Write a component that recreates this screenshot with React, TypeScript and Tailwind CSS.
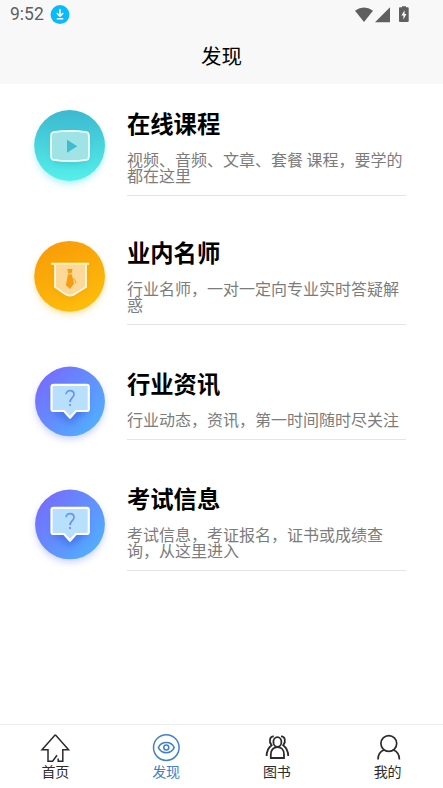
import React from "react";

interface DiscoverItem {
  title: string;
  description: string;
  icon: React.ReactNode;
  rowClass: string;
  bodyClass: string;
}

interface TabProps {
  label: string;
  active?: boolean;
  children: React.ReactNode;
}

function CourseIcon() {
  return (
    <svg viewBox="0 0 100 100" aria-hidden className="h-[100px] w-[100px] shrink-0">
      <defs>
        <linearGradient id="course-bg" x1="0" y1="0" x2="0" y2="1">
          <stop offset="0" stopColor="#3cb8d0" />
          <stop offset="1" stopColor="#55f0ea" />
        </linearGradient>
        <filter id="course-blur" x="-30%" y="-30%" width="160%" height="160%">
          <feGaussianBlur stdDeviation="3.5" />
        </filter>
      </defs>
      <circle cx="49.6" cy="54.5" r="34.5" fill="#5fe3e8" opacity="0.5" filter="url(#course-blur)" />
      <circle cx="49.6" cy="50.5" r="35.4" fill="url(#course-bg)" />
      <path d="M33 40Q50 33 67 40V66Q50 71 33 66Z" fill="#2aa9bb" opacity="0.45" filter="url(#course-blur)" />
      <path
        d="M33.5 37.2Q50 34.6 66.5 37.2Q68.6 37.6 68.8 39.5Q69.6 51 68.8 62.5Q68.6 64.4 66.5 64.8Q50 67.4 33.5 64.8Q31.4 64.4 31.2 62.5Q30.6 51 31.2 39.5Q31.4 37.6 33.5 37.2Z"
        fill="#a0e3e7"
        stroke="#f5ffff"
        strokeWidth="1.8"
      />
      <path d="M47 44.8L57.3 51.2L47 57.8Z" fill="#3fbccd" />
    </svg>
  );
}

function TeacherIcon() {
  return (
    <svg viewBox="0 0 100 100" aria-hidden className="h-[100px] w-[100px] shrink-0">
      <defs>
        <linearGradient id="teacher-bg" x1="0.3" y1="0" x2="0.7" y2="1">
          <stop offset="0" stopColor="#f99c08" />
          <stop offset="1" stopColor="#fdbe0b" />
        </linearGradient>
        <filter id="teacher-blur" x="-30%" y="-30%" width="160%" height="160%">
          <feGaussianBlur stdDeviation="3.5" />
        </filter>
      </defs>
      <circle cx="49.6" cy="55" r="34.5" fill="#fdc650" opacity="0.5" filter="url(#teacher-blur)" />
      <circle cx="49.6" cy="51.3" r="35.4" fill="url(#teacher-bg)" />
      <path d="M34 42H66V64L50 74L34 64Z" fill="#ee8e00" opacity="0.4" filter="url(#teacher-blur)" />
      <path d="M35 39.5V62L44 68.3Q50 73 56 68.3L66 62V39.5" fill="#fdd999" stroke="#fff8e0" strokeWidth="1.8" />
      <path d="M31 38.8H69" stroke="#fff6cf" strokeWidth="2" />
      <path d="M47.3 44H52.5L51.6 48.2H48.2ZM48 49.3H51.8L54 58.8L50 64L45.8 60.2Z" fill="#f59d10" />
      <path d="M53.5 53L56 57.5L54.8 58.3" fill="none" stroke="#f59d10" strokeWidth="0.9" />
    </svg>
  );
}

function QuestionIcon({ id }: { id: string }) {
  return (
    <svg viewBox="0 0 100 100" aria-hidden className="h-[100px] w-[100px] shrink-0">
      <defs>
        <linearGradient id={`${id}-bg`} x1="0.1" y1="0.15" x2="0.9" y2="0.85">
          <stop offset="0" stopColor="#756efc" />
          <stop offset="1" stopColor="#51aeff" />
        </linearGradient>
        <linearGradient id={`${id}-mark`} x1="0" y1="0" x2="1" y2="1">
          <stop offset="0" stopColor="#5b9cfa" />
          <stop offset="1" stopColor="#6e86f8" />
        </linearGradient>
        <filter id={`${id}-blur`} x="-30%" y="-30%" width="160%" height="160%">
          <feGaussianBlur stdDeviation="3.5" />
        </filter>
      </defs>
      <circle cx="50" cy="53" r="34.5" fill="#8f9cff" opacity="0.45" filter={`url(#${id}-blur)`} />
      <circle cx="50" cy="49.4" r="34.9" fill={`url(#${id}-bg)`} />
      <path d="M33 38H67V60L50 72L33 60Z" fill="#3355dd" opacity="0.45" filter={`url(#${id}-blur)`} />
      <path
        d="M33.5 32.8H66.8Q68.8 32.8 68.8 34.8V57Q68.8 59 66.8 59H56L50 65.8L44 59H33.5Q31.5 59 31.5 57V34.8Q31.5 32.8 33.5 32.8Z"
        fill="#b8dffc"
        stroke="#fff"
        strokeWidth="2.2"
        strokeLinejoin="round"
      />
      <path d="M46 42.2C46 37.4 54 37.4 54 42.4C54 45.6 50 45.8 50 50.3" fill="none" stroke={`url(#${id}-mark)`} strokeWidth="1.6" />
      <circle cx="50" cy="53" r="1.1" fill="#6f84f8" />
    </svg>
  );
}

const items: DiscoverItem[] = [
  {
    title: "在线课程",
    description: "视频、音频、文章、套餐 课程，要学的都在这里",
    icon: <CourseIcon />,
    rowClass: "h-[130px]",
    bodyClass: "pt-4",
  },
  {
    title: "业内名师",
    description: "行业名师，一对一定向专业实时答疑解惑",
    icon: <TeacherIcon />,
    rowClass: "h-[127px]",
    bodyClass: "pt-[15px]",
  },
  {
    title: "行业资讯",
    description: "行业动态，资讯，第一时间随时尽关注",
    icon: <QuestionIcon id="news" />,
    rowClass: "h-[123px]",
    bodyClass: "pt-[19px]",
  },
  {
    title: "考试信息",
    description: "考试信息，考证报名，证书或成绩查询，从这里进入",
    icon: <QuestionIcon id="exam" />,
    rowClass: "h-[123px]",
    bodyClass: "pt-[11px]",
  },
];

function StatusBar() {
  return (
    <div className="flex h-[30px] items-center pl-[10px] pr-[33px] text-[#5f5f5f]">
      <span className="font-[Roboto,sans-serif] text-[17.5px] leading-none">9:52</span>
      <svg viewBox="0 0 20 20" aria-hidden className="ml-1.5 h-5 w-5">
        <circle cx="10" cy="9.6" r="9.5" fill="#09bbfb" />
        <path d="M10 4V11M6.8 8L10 11.2L13.2 8M6.8 13.7H13.2" fill="none" stroke="#fff" strokeWidth="1.6" />
      </svg>
      <svg viewBox="0 0 55 18" fill="currentColor" aria-hidden className="ml-auto h-[18px] w-[55px]">
        <path d="M0 4.8Q9 -1.8 18 4.8L9 16Z" />
        <path d="M35 1.2V16.2H20Z" />
        <path d="M47 1.2V0.2H51V1.2H52.6Q53.7 1.2 53.7 2.3V15Q53.7 16.1 52.6 16.1H45Q44 16.1 44 15V2.3Q44 1.2 45 1.2Z" />
        <path d="M49.6 4.2L46.4 9.6H48.4V13.4L51.4 8H49.6Z" fill="#f8f8f8" />
      </svg>
    </div>
  );
}

function DiscoverRow({ item }: { item: DiscoverItem }) {
  return (
    <div className={`flex items-start gap-[7px] pl-5 ${item.rowClass}`}>
      {item.icon}
      <div className={`w-[279px] ${item.bodyClass}`}>
        <h2 className="text-[23.3px] font-bold leading-6 text-black">{item.title}</h2>
        <p className="mt-4 border-b border-[#e4e4e4] pb-3 text-base leading-4 text-[#7c7c7c]">
          {item.description}
        </p>
      </div>
    </div>
  );
}

function Tab({ label, active = false, children }: TabProps) {
  return (
    <button
      type="button"
      className={`flex flex-1 flex-col items-center pt-2 ${active ? "text-[#4080cc]" : "text-[#2b2b2b]"}`}
    >
      <svg viewBox="0 0 30 30" fill="none" stroke="currentColor" strokeWidth="1.5" aria-hidden className="h-[30px] w-[30px]">
        {children}
      </svg>
      <span className="text-sm leading-4">{label}</span>
    </button>
  );
}

export default function App() {
  return (
    <div className="flex h-[788px] w-[443px] flex-col bg-white font-['Noto_Sans_CJK_SC',sans-serif]">
      <header className="h-[84px] bg-[#f8f8f8]">
        <StatusBar />
        <h1 className="pt-[11px] text-center text-[20.5px] leading-7 text-black">发现</h1>
      </header>

      <main className="flex-1 pt-[11px]">
        {items.map((item) => (
          <DiscoverRow key={item.title} item={item} />
        ))}
      </main>

      <nav className="flex h-16 border-t border-[#ececec]">
        <Tab label="首页">
          <path d="M15.3 1.8L2 16.8H8V28.2H12.6L17 22.3M18.2 28.2H22.8V16.8H28.6L15.3 1.8M18.2 28.9V25.5" />
        </Tab>
        <Tab label="发现" active>
          <circle cx="15.3" cy="14.6" r="12.8" />
          <path d="M7.4 14.6C10.4 7.9 20.2 7.9 23.2 14.6C20.2 21.3 10.4 21.3 7.4 14.6Z" />
          <circle cx="15.3" cy="14.6" r="2.5" />
        </Tab>
        <Tab label="图书">
          <g strokeWidth="1.8">
            <ellipse cx="15.4" cy="9" rx="4" ry="4.8" />
            <path d="M8.8 25V21.5C8.8 17 11.4 14.2 15.4 14.2S22 17 22 21.5V25Z" />
            <path d="M11.8 3.4C7.6 3.2 6.6 8.7 9.6 12.2C6.2 14.8 4.6 17.5 4.6 23M19 3.4C23.2 3.2 24.2 8.7 21.2 12.2C24.6 14.8 26.2 17.5 26.2 23" />
          </g>
        </Tab>
        <Tab label="我的">
          <g strokeWidth="1.7">
            <circle cx="15.8" cy="10.5" r="7.9" />
            <path d="M5 26.4C5 21.9 7.4 18.4 11 17M26.4 26.4C26.4 21.9 24 18.4 20.4 17" />
          </g>
        </Tab>
      </nav>
    </div>
  );
}
